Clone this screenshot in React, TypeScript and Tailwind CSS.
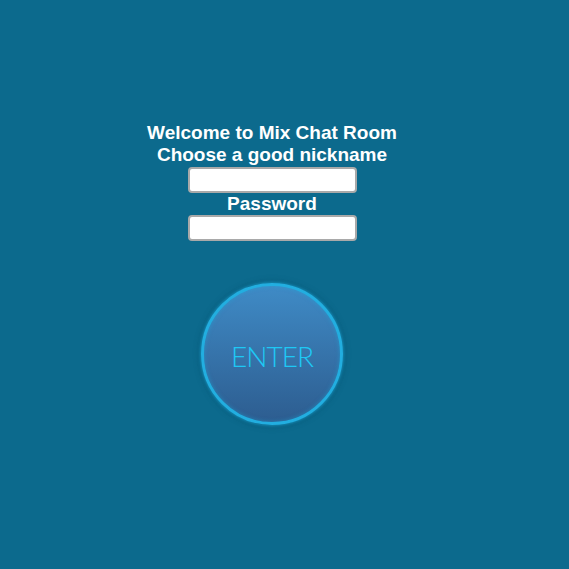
export default function App() {
  return (
    <div className="min-h-screen w-full bg-[#0c6a8d] font-['Liberation_Sans',Arial,sans-serif]">
      <div className="w-[544px] pt-[122px] flex flex-col items-center text-center">
        <h1 className="text-white font-bold text-[19px] leading-[22px]">Welcome to Mix Chat Room</h1>
        <label className="text-white font-bold text-[19px] leading-[22px]">Choose a good nickname</label>
        <input
          type="text"
          className="mt-[1px] w-[169px] h-[26px] rounded-[4px] bg-white border-2 border-[#a9a9a9] outline-none"
        />
        <label className="text-white font-bold text-[19px] leading-[22px]">Password</label>
        <input
          type="password"
          className="w-[169px] h-[26px] rounded-[4px] bg-white border-2 border-[#a9a9a9] outline-none"
        />
        <button className="mt-[40px] w-[146px] h-[146px] rounded-full p-[2px] bg-[#0b6587] shadow-[0_0_5px_1px_rgba(8,80,110,0.35)]">
          <div className="w-full h-full rounded-full border-[3px] border-[#22aee0] bg-gradient-to-b from-[#3f8bc6] to-[#2d5d90] shadow-[0_0_3px_1px_rgba(30,170,220,0.5),inset_0_0_4px_rgba(30,170,220,0.5)] flex items-center justify-center">
            <span className="mt-[3px] font-['Lato',sans-serif] font-light text-[28px] leading-none text-[#1ec8f5] tracking-[-1px]">ENTER</span>
          </div>
        </button>
      </div>
    </div>
  );
}
